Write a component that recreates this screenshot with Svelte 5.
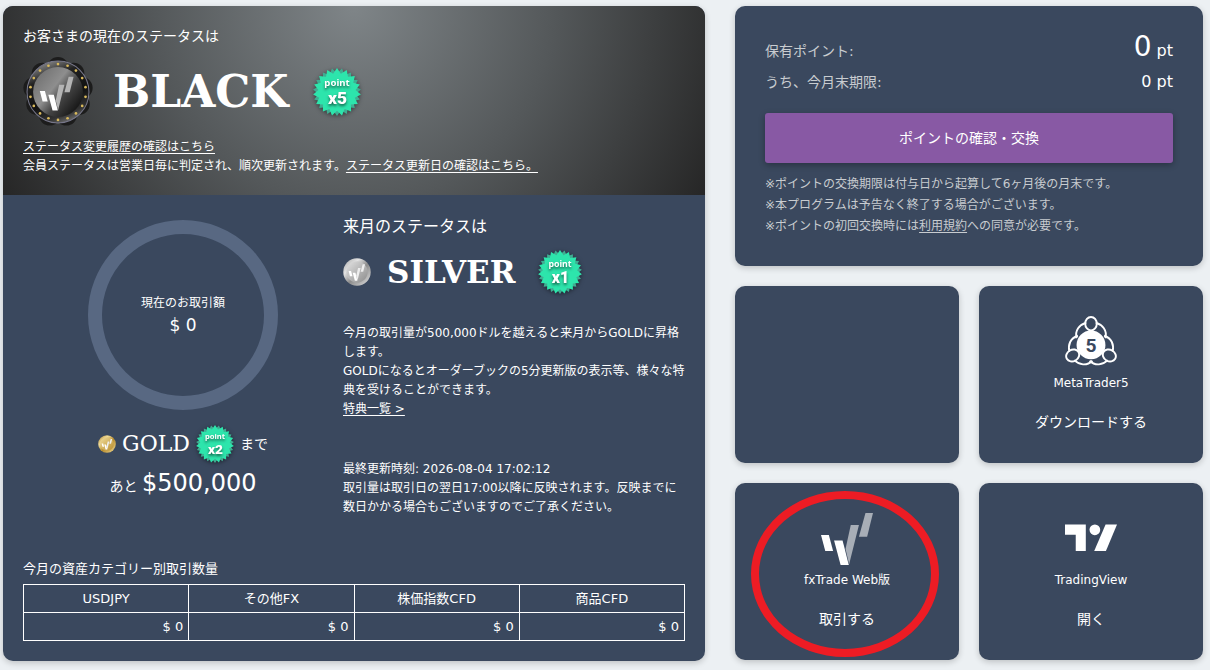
<script lang="ts">
  const volumes = [
    { name: 'USDJPY', amount: '$ 0' },
    { name: 'その他FX', amount: '$ 0' },
    { name: '株価指数CFD', amount: '$ 0' },
    { name: '商品CFD', amount: '$ 0' },
  ];

  function burst(spikes: number, outer: number, inner: number, turn = 0) {
    const points = [];
    for (let i = 0; i < spikes * 2; i++) {
      const r = i % 2 ? inner : outer;
      const a = (Math.PI * i) / spikes + turn - Math.PI / 2;
      points.push(`${(50 + r * Math.cos(a)).toFixed(1)},${(50 + r * Math.sin(a)).toFixed(1)}`);
    }
    return points.join(' ');
  }

  const front = burst(15, 50, 39);
  const back = burst(15, 50, 39, Math.PI / 15);

  function around(count: number, r: number) {
    return Array.from({ length: count }, (_, i) => {
      const a = (2 * Math.PI * i) / count - Math.PI / 2;
      return { x: 104 + r * Math.cos(a), y: 104 + r * Math.sin(a) };
    });
  }

  const stars = around(18, 83);
  const scallops = around(9, 72);
</script>

{#snippet mark(dim)}
  <polygon points="0,67 24,67 37,116 13,116" fill="#fff" />
  <polygon points="91,37 116,37 86,157 75,110" fill={dim} />
  <polygon points="40,84 66,84 85,159 60,159" fill="#fff" />
  <polygon points="136,0 159,0 141,73 116,73" fill={dim} />
{/snippet}

{#snippet badge(rate)}
  <svg class="badge" viewBox="0 0 100 100" role="img" aria-label="point {rate}">
    <polygon points={back} fill="#3fae92" />
    <polygon points={front} fill="#2de5ac" />
    <text x="50" y="38" class="badge-label">point</text>
    <text x="51" y="76" class="badge-rate">{rate}</text>
  </svg>
{/snippet}

{#snippet coin(id, light, mid, dark)}
  <svg class="coin" viewBox="0 0 100 100" aria-hidden="true">
    <defs>
      <linearGradient id="{id}-rim" x1="0" y1="0" x2="1" y2="1">
        <stop offset="0" stop-color={mid} />
        <stop offset=".3" stop-color={light} />
        <stop offset=".55" stop-color={dark} />
        <stop offset="1" stop-color={light} />
      </linearGradient>
      <linearGradient id="{id}-face" x1="0" y1="0" x2="1" y2="1">
        <stop offset="0" stop-color={light} />
        <stop offset="1" stop-color={dark} />
      </linearGradient>
    </defs>
    <circle cx="50" cy="50" r="49" fill="url(#{id}-rim)" />
    <circle cx="50" cy="50" r="38" fill="url(#{id}-face)" />
    <g transform="translate(20 22) scale(.37)">{@render mark('#eee')}</g>
  </svg>
{/snippet}

<main>
  <section class="card status">
    <header>
      <p class="lead">お客さまの現在のステータスは</p>
      <div class="rank black">
        <svg class="medal" viewBox="0 0 208 208" aria-hidden="true">
          <defs>
            <linearGradient id="ring" x1=".3" y1="0" x2=".7" y2="1">
              <stop offset="0" stop-color="#8a8a8a" />
              <stop offset=".25" stop-color="#222" />
              <stop offset=".6" stop-color="#111" />
              <stop offset=".85" stop-color="#333" />
              <stop offset="1" stop-color="#777" />
            </linearGradient>
            <linearGradient id="disc" x1="0" y1=".1" x2="1" y2=".9">
              <stop offset="0" stop-color="#6c6c6c" />
              <stop offset=".4" stop-color="#8e8e8e" />
              <stop offset=".6" stop-color="#444" />
              <stop offset="1" stop-color="#080808" />
            </linearGradient>
          </defs>
          {#each scallops as s}
            <circle cx={s.x} cy={s.y} r="32" fill="#1c1c1c" />
          {/each}
          <circle cx="104" cy="104" r="92" fill="url(#ring)" stroke="#77778a" stroke-width="3" />
          <circle cx="104" cy="104" r="74" fill="url(#disc)" />
          {#each stars as s}
            <circle cx={s.x} cy={s.y} r="4" fill="#d9b95c" />
          {/each}
          <g transform="translate(50 59) scale(.63)">{@render mark('#b4b4b4')}</g>
        </svg>
        <strong class="wordmark">BLACK</strong>
        {@render badge('x5')}
      </div>
      <p><a href="#history">ステータス変更履歴の確認はこちら</a></p>
      <p>会員ステータスは営業日毎に判定され、順次更新されます。<a href="#schedule">ステータス更新日の確認はこちら。</a></p>
    </header>

    <div class="progress">
      <div class="amount">
        <div class="ring">
          <span>現在のお取引額</span>
          <span class="current">$ 0</span>
        </div>
        <div class="rank gold">
          {@render coin('gold', '#f0dc9a', '#a97c22', '#b88c2c')}
          <strong class="wordmark">GOLD</strong>
          {@render badge('x2')}
          <span class="until">まで</span>
        </div>
        <p class="remaining">あと <span>$500,000</span></p>
      </div>

      <div class="next">
        <h2>来月のステータスは</h2>
        <div class="rank silver">
          {@render coin('silver', '#e2e2e2', '#a5a5a5', '#8c8c8c')}
          <strong class="wordmark">SILVER</strong>
          {@render badge('x1')}
        </div>
        <p>今月の取引量が500,000ドルを越えると来月からGOLDに昇格します。</p>
        <p>GOLDになるとオーダーブックの5分更新版の表示等、様々な特典を受けることができます。</p>
        <p><a href="#benefits">特典一覧 &gt;</a></p>
        <p class="updated">最終更新時刻: 2026-08-04 17:02:12</p>
        <p>取引量は取引日の翌日17:00以降に反映されます。反映までに数日かかる場合もございますのでご了承ください。</p>
      </div>
    </div>

    <div class="volume">
      <table>
        <caption>今月の資産カテゴリー別取引数量</caption>
        <thead>
          <tr>
            {#each volumes as v}
              <th scope="col">{v.name}</th>
            {/each}
          </tr>
        </thead>
        <tbody>
          <tr>
            {#each volumes as v}
              <td>{v.amount}</td>
            {/each}
          </tr>
        </tbody>
      </table>
    </div>
  </section>

  <div class="side">
    <section class="card points">
      <dl>
        <div class="held">
          <dt>保有ポイント:</dt>
          <dd><span class="big">0</span> pt</dd>
        </div>
        <div>
          <dt>うち、今月末期限:</dt>
          <dd>0 pt</dd>
        </div>
      </dl>
      <button type="button">ポイントの確認・交換</button>
      <p>※ポイントの交換期限は付与日から起算して6ヶ月後の月末です。</p>
      <p>※本プログラムは予告なく終了する場合がございます。</p>
      <p>※ポイントの初回交換時には<a href="#terms">利用規約</a>への同意が必要です。</p>
    </section>

    <div class="tiles">
      <div class="card tile"></div>

      <a class="card tile" href="#mt5">
        <svg viewBox="-27 -30 54 54" aria-hidden="true">
          <g fill="none" stroke="#fff" stroke-width="2">
            {#each [0, 120, 240] as turn}
              <g transform="rotate({turn})">
                <path d="M-15 -7 C-17 -15 -12 -21 -5 -23 M15 -7 C17 -15 12 -21 5 -23" />
                <ellipse cx="0" cy="-22" rx="6" ry="7" />
              </g>
            {/each}
          </g>
          <circle r="15" fill="#fff" />
          <text y="7" class="five">5</text>
        </svg>
        <span class="name">MetaTrader5</span>
        <span class="action">ダウンロードする</span>
      </a>

      <a class="card tile" href="#fxtrade">
        <svg viewBox="0 0 159 159" aria-hidden="true">{@render mark('#a8aeb7')}</svg>
        <span class="name">fxTrade Web版</span>
        <span class="action">取引する</span>
        <span class="highlight"></span>
      </a>

      <a class="card tile" href="#tradingview">
        <svg viewBox="0 -34 155 155" aria-hidden="true">
          <g fill="#fff">
            <path d="M0 0H62V79H32V31H0z" />
            <circle cx="89" cy="16" r="16" />
            <path d="M121 0H155L122 79H87z" />
          </g>
        </svg>
        <span class="name">TradingView</span>
        <span class="action">開く</span>
      </a>
    </div>
  </div>
</main>

<style>
  :global(body) {
    margin: 0;
    background: #ecf0f3;
  }

  main {
    display: grid;
    grid-template-columns: 3fr 2fr;
    gap: 30px;
    padding: 6px 7px 10px 3px;
    color: #fff;
    font-family: 'DejaVu Sans', 'Noto Sans CJK JP', sans-serif;
    font-size: 12px;
    line-height: 19px;
  }

  p, h2, dl, dd {
    margin: 0;
  }

  a {
    color: inherit;
    text-underline-offset: 2px;
  }

  .card {
    border-radius: 10px;
    background: #3a485e;
    box-shadow: 0 2px 6px rgba(0, 0, 0, 0.2);
  }

  .status {
    overflow: hidden;
  }

  header {
    padding: 20px 20px 19px;
    background: radial-gradient(circle at 50% 0, #7f8588, #54585a 50%, #262626);
  }

  .lead {
    font-size: 14px;
    line-height: 20px;
  }

  .rank {
    display: flex;
    align-items: center;
  }

  .wordmark {
    font-family: 'DejaVu Serif', serif;
    line-height: 1;
  }

  .badge {
    flex: none;
    filter: drop-shadow(0 1px 2px rgba(0, 0, 0, 0.5));
  }

  .badge-label,
  .badge-rate {
    fill: #fff;
    text-anchor: middle;
    text-shadow: 0 2px 3px rgba(0, 0, 0, 0.6);
  }

  .badge-label {
    font: 700 20px 'Noto Sans', sans-serif;
  }

  .badge-rate {
    font: 900 36px Roboto, sans-serif;
  }

  .coin, .medal {
    flex: none;
  }

  .black {
    gap: 20px;
    height: 70px;
    margin: 11px 0;
  }

  .black .medal {
    width: 70px;
  }

  .black .wordmark {
    min-width: 180px;
    font-size: 44px;
  }

  .black .badge {
    width: 48px;
  }

  .progress {
    display: grid;
    grid-template-columns: 320px 1fr;
    padding: 21px 17px 42px 20px;
  }

  .amount {
    display: flex;
    flex-direction: column;
    align-items: center;
    padding-top: 4px;
  }

  .ring {
    display: flex;
    flex-direction: column;
    align-items: center;
    justify-content: center;
    box-sizing: border-box;
    width: 190px;
    height: 190px;
    border: 14px solid #586882;
    border-radius: 50%;
  }

  .current {
    font-size: 17px;
    line-height: 24px;
  }

  .gold {
    gap: 6px;
    margin-top: 15px;
  }

  .gold .coin {
    width: 18px;
  }

  .gold .wordmark {
    font-size: 22px;
    font-weight: 400;
  }

  .gold .badge {
    width: 38px;
  }

  .until {
    font-size: 14px;
  }

  .remaining {
    font-size: 14px;
    line-height: 40px;
  }

  .remaining span {
    font-size: 24px;
  }

  h2 {
    font-size: 16px;
    font-weight: 400;
    line-height: 22px;
  }

  .silver {
    gap: 16px;
    height: 44px;
    margin: 12px 0 30px;
  }

  .silver .coin {
    width: 28px;
  }

  .silver .wordmark {
    min-width: 135px;
    font-size: 31px;
  }

  .silver .badge {
    width: 44px;
  }

  .updated {
    margin-top: 41px;
  }

  .volume {
    padding: 0 20px 20px;
    font-size: 13px;
  }

  table {
    width: 100%;
    table-layout: fixed;
    border-collapse: collapse;
  }

  caption {
    padding-bottom: 6px;
    text-align: left;
  }

  th, td {
    padding: 4px 5px;
    border: 1px solid #fff;
    font-weight: 400;
  }

  td {
    text-align: right;
  }

  .side {
    display: flex;
    flex-direction: column;
    gap: 20px;
  }

  .points {
    padding: 24px 30px 29px;
    color: #c8ccd0;
    line-height: 21px;
  }

  dl > div {
    display: flex;
    align-items: baseline;
    justify-content: space-between;
    font-size: 14px;
    line-height: 28px;
  }

  dl > .held {
    line-height: 34px;
  }

  dd {
    color: #fff;
    font-size: 16px;
  }

  .big {
    font-size: 28px;
  }

  button {
    display: block;
    width: 100%;
    height: 50px;
    margin: 17px 0 11px;
    border: 0;
    border-radius: 3px;
    background: #8859a4;
    box-shadow: 0 2px 6px rgba(0, 0, 0, 0.3);
    color: #fff;
    font: inherit;
    font-size: 14px;
    cursor: pointer;
  }

  .tiles {
    display: grid;
    grid-template-columns: 1fr 1fr;
    gap: 20px;
  }

  .tile {
    position: relative;
    display: flex;
    flex-direction: column;
    align-items: center;
    padding: 30px 0 31px;
    line-height: 20px;
    text-decoration: none;
  }

  .tile svg {
    width: 52px;
    height: 52px;
    margin-bottom: 5px;
  }

  .five {
    fill: #3a485e;
    font: 700 20px Roboto, sans-serif;
    text-anchor: middle;
  }

  .action {
    margin-top: 19px;
    font-size: 14px;
  }

  /* hand-drawn style marker round the tile */
  .highlight {
    position: absolute;
    inset: 8px 20px 3px 16px;
    border: 8px solid #ed1c24;
    border-radius: 50%;
    pointer-events: none;
  }
</style>
